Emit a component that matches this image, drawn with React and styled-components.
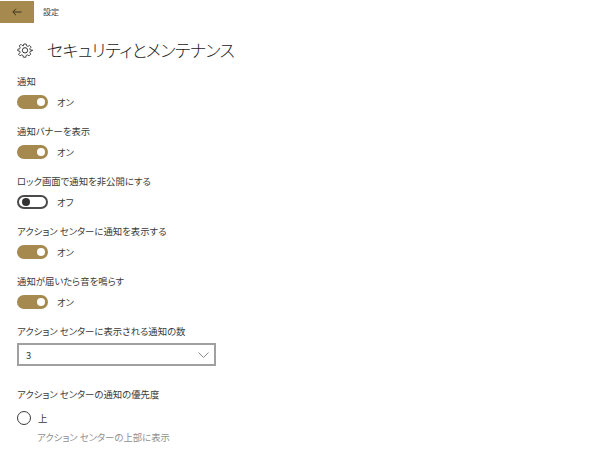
import React from 'react';
import styled, { createGlobalStyle } from 'styled-components';

const GlobalStyle = createGlobalStyle`
  html, body {
    margin: 0;
    padding: 0;
    background: #ffffff;
    overflow: hidden;
  }
  body {
    font-family: "Noto Sans CJK JP", "Noto Sans", sans-serif;
    font-feature-settings: "palt";
    color: #1f1f1f;
  }
`;

const Toggle = ({ on }) => (
  <ToggleRow>
    <Track $on={on}>
      <Knob $on={on} />
    </Track>
    <ToggleLabel>{on ? 'オン' : 'オフ'}</ToggleLabel>
  </ToggleRow>
);

const settings = [
  { label: '通知', on: true },
  { label: '通知バナーを表示', on: true },
  { label: 'ロック画面で通知を非公開にする', on: false },
  { label: 'アクション センターに通知を表示する', on: true },
  { label: '通知が届いたら音を鳴らす', on: true },
];

const App = () => {
  return (
    <>
      <GlobalStyle />
      <Page>
        <TitleBar>
          <BackButton>
            <svg width="10" height="8" viewBox="0 0 10 8" fill="none" stroke="#3a3320" strokeWidth="1">
              <path d="M9.5 4H1M4 .8L.8 4 4 7.2" />
            </svg>
          </BackButton>
          <BarTitle>設定</BarTitle>
        </TitleBar>
        <Content>
          <Header>
            <svg width="16" height="16" viewBox="0 0 24 24" fill="none" stroke="#333" strokeWidth="1.5" strokeLinejoin="round">
              <path d="M10 2h4l.6 3 2.3 1 2.6-1.6 2.8 2.8L20 9.8l1 2.2 3 .6v-1 1.8l-3 .6-1 2.3 1.6 2.6-2.8 2.8-2.6-1.6-2.3 1-.6 3h-4l-.6-3-2.3-1-2.6 1.6-2.8-2.8L4 16.2l-1-2.3-3-.6v-2.6l3-.6 1-2.3-1.6-2.6 2.8-2.8L7 4.4 9.4 5z" transform="translate(1.2 1.2) scale(.9)" />
              <circle cx="12" cy="12.5" r="4" />
            </svg>
            <Title>セキュリティとメンテナンス</Title>
          </Header>
          {settings.map((item) => (
            <Setting key={item.label}>
              <Label>{item.label}</Label>
              <Toggle on={item.on} />
            </Setting>
          ))}
          <SelectBlock>
            <Label>アクション センターに表示される通知の数</Label>
            <Select>
              <span>3</span>
              <svg width="11" height="6" viewBox="0 0 11 6" fill="none" stroke="#8a8a8a" strokeWidth="1">
                <path d="M.5.5l5 5 5-5" />
              </svg>
            </Select>
          </SelectBlock>
          <RadioBlock>
            <Label>アクション センターの通知の優先度</Label>
            <RadioRow>
              <Radio />
              <RadioLabel>上</RadioLabel>
            </RadioRow>
            <Hint>アクション センターの上部に表示</Hint>
          </RadioBlock>
        </Content>
      </Page>
    </>
  );
};

export default App;

const Page = styled.div`
  width: 607px;
  height: 455px;
  overflow: hidden;
  background: #ffffff;
`;

const TitleBar = styled.div`
  display: flex;
  align-items: center;
  height: 23px;
`;

const BackButton = styled.div`
  display: flex;
  width: 34px;
  height: 22px;
  align-items: center;
  justify-content: center;
  background: #a5894e;
`;

const BarTitle = styled.span`
  margin-left: 9px;
  font-size: 8px;
  color: #444;
`;

const Content = styled.div`
  padding: 0 0 0 17px;
`;

const Header = styled.div`
  display: flex;
  align-items: center;
  height: 30px;
  margin-top: 12px;
  margin-bottom: 8px;
`;

const Title = styled.h1`
  margin: 0 0 0 14px;
  font-size: 17px;
  font-weight: 300;
  line-height: 30px;
  letter-spacing: -0.55px;
  color: #222;
`;

const Setting = styled.div`
  height: 50px;
`;

const Label = styled.div`
  font-size: 9.4px;
  line-height: 16px;
  color: #3a3a3a;
`;

const ToggleRow = styled.div`
  display: flex;
  align-items: center;
  height: 14px;
  margin-top: 6px;
`;

const Track = styled.div`
  display: flex;
  align-items: center;
  justify-content: ${(p) => (p.$on ? 'flex-end' : 'flex-start')};
  box-sizing: border-box;
  width: 31px;
  height: 14px;
  padding: 0 3px;
  border-radius: 7px;
  background: ${(p) => (p.$on ? '#a5894e' : '#ffffff')};
  border: ${(p) => (p.$on ? 'none' : '2px solid #4a4a4a')};
`;

const Knob = styled.div`
  width: 8px;
  height: 8px;
  border-radius: 50%;
  background: ${(p) => (p.$on ? '#ffffff' : '#333')};
`;

const ToggleLabel = styled.span`
  margin-left: 9px;
  font-size: 9.4px;
  color: #3a3a3a;
`;

const SelectBlock = styled.div`
  margin-top: 0;
`;

const Select = styled.div`
  display: flex;
  align-items: center;
  justify-content: space-between;
  box-sizing: border-box;
  width: 199px;
  height: 23px;
  margin-top: 4px;
  padding: 0 5px 0 7px;
  border: 2px solid #a0a0a0;
  font-size: 9.4px;
  color: #3a3a3a;
`;

const RadioBlock = styled.div`
  margin-top: 20px;
`;

const RadioRow = styled.div`
  display: flex;
  align-items: center;
  margin-top: 9px;
`;

const Radio = styled.div`
  box-sizing: border-box;
  width: 14px;
  height: 14px;
  border: 1.5px solid #3a3a3a;
  border-radius: 50%;
`;

const RadioLabel = styled.span`
  margin-left: 7px;
  font-size: 9.4px;
  color: #3a3a3a;
`;

const Hint = styled.div`
  margin: 5px 0 0 20px;
  font-size: 9.4px;
  line-height: 14px;
  color: #8f8f8f;
`;
